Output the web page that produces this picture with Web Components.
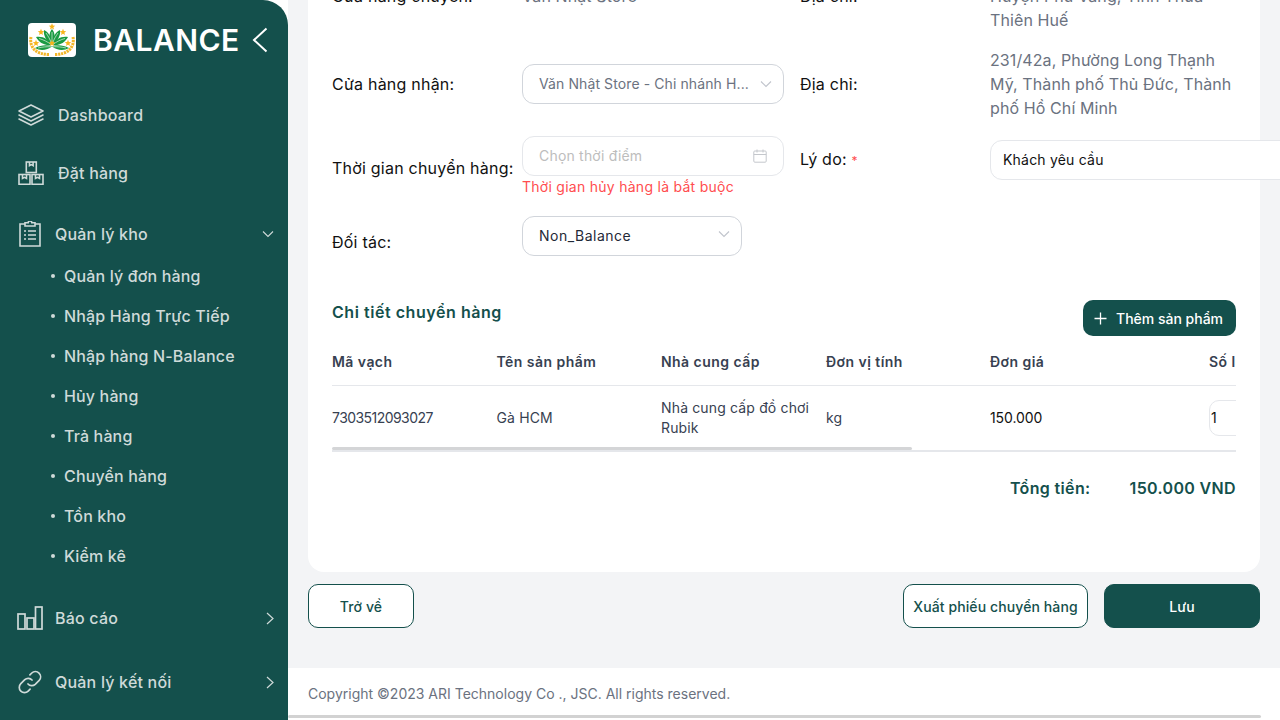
<!DOCTYPE html>
<html lang="vi">
<head>
<meta charset="utf-8">
<title>Balance</title>
<style>
html,body{margin:0;height:100%;overflow:hidden;background:#fff}
body{font-family:Inter,"Noto Sans",sans-serif;font-size:16px;color:#111}
</style>
</head>
<body>
<x-app>
  <x-sidebar slot="side">
    <x-nav-item h="58" tx="58" style="--ix:18px">
      <svg slot="icon" width="26" height="22" viewBox="0 0 26 22" fill="none" stroke="currentColor" stroke-width="1.6" stroke-linejoin="round" stroke-linecap="round"><path d="M13 1l12 6-12 6L1 7z"/><path d="M1 11l12 6 12-6"/><path d="M1 15l12 6 12-6"/></svg>
      Dashboard
    </x-nav-item>
    <x-nav-item h="58" tx="58" style="--ix:18px">
      <svg slot="icon" width="26" height="24" viewBox="0 0 26 24" fill="none" stroke="currentColor" stroke-width="1.6"><rect x="8.300" y="1" width="10" height="10.500"/><path d="M11.500 1v3.600l1.800-1 1.800 1V1"/><rect x="1" y="13.500" width="11" height="9.800"/><path d="M4.500 13.500v3.900l2-1 2 1v-3.900"/><rect x="14" y="13.500" width="11" height="9.800"/><path d="M17.500 13.500v3.900l2-1 2 1v-3.900"/></svg>
      Đặt hàng
    </x-nav-item>
    <x-nav-item h="44" tx="55" mt="10" chevron="down" style="--ix:19px">
      <svg slot="icon" width="22" height="26" viewBox="0 0 22 26" fill="none" stroke="currentColor" stroke-width="1.6"><path d="M6 3H1v22h20V3h-5"/><path d="M6 5h10V1.800h-3.200a1.800 1.800 0 0 0-3.600 0H6z"/><path d="M5 10h2M5 14h2M5 18h2M9 10h8M9 14h8M9 18h8"/></svg>
      Quản lý kho
    </x-nav-item>
    <x-sub-item>Quản lý đơn hàng</x-sub-item>
    <x-sub-item>Nhập Hàng Trực Tiếp</x-sub-item>
    <x-sub-item>Nhập hàng N-Balance</x-sub-item>
    <x-sub-item>Hủy hàng</x-sub-item>
    <x-sub-item>Trả hàng</x-sub-item>
    <x-sub-item>Chuyển hàng</x-sub-item>
    <x-sub-item>Tồn kho</x-sub-item>
    <x-sub-item>Kiểm kê</x-sub-item>
    <x-nav-item h="64" tx="55" mt="10" chevron="right" style="--ix:17px">
      <svg slot="icon" width="26" height="24" viewBox="0 0 26 24" fill="none" stroke="currentColor" stroke-width="1.700"><rect x="1" y="8" width="7" height="15"/><rect x="10" y="12" width="7" height="11"/><rect x="18.500" y="1" width="6.500" height="22"/></svg>
      Báo cáo
    </x-nav-item>
    <x-nav-item h="64" tx="55" chevron="right" style="--ix:18px">
      <svg slot="icon" width="24" height="24" viewBox="0 0 24 24" fill="none" stroke="currentColor" stroke-width="1.700" stroke-linecap="round"><path d="M10 14a5 5 0 0 0 7.200.3l4-4A5.200 5.200 0 0 0 13.800 3l-1.900 1.900"/><path d="M14 10a5 5 0 0 0-7.200-.3l-4 4a5.200 5.200 0 0 0 7.400 7.400l1.900-1.900"/></svg>
      Quản lý kết nối
    </x-nav-item>
  </x-sidebar>

  <x-card>
    <x-form-row mode="top">
      <span slot="l1">Cửa hàng chuyển:</span>
      <x-value slot="c1">Văn Nhật Store</x-value>
      <span slot="l2">Địa chỉ:</span>
      <x-value slot="c2">Huyện Phú Vang, Tỉnh Thừa Thiên Huế</x-value>
    </x-form-row>
    <x-form-row>
      <span slot="l1">Cửa hàng nhận:</span>
      <x-select slot="c1" muted>Văn Nhật Store - Chi nhánh H...</x-select>
      <span slot="l2">Địa chỉ:</span>
      <x-value slot="c2">231/42a, Phường Long Thạnh Mỹ, Thành phố Thủ Đức, Thành phố Hồ Chí Minh</x-value>
    </x-form-row>
    <x-form-row mode="date">
      <span slot="l1">Thời gian chuyển hàng:</span>
      <x-date slot="c1" error="Thời gian hủy hàng là bắt buộc">Chọn thời điểm</x-date>
      <span slot="l2">Lý do: <b>*</b></span>
      <x-input slot="c2">Khách yêu cầu</x-input>
    </x-form-row>
    <x-form-row mode="partner">
      <span slot="l1">Đối tác:</span>
      <x-select slot="c1" narrow>Non_Balance</x-select>
    </x-form-row>
    <x-products></x-products>
  </x-card>
  <x-actions></x-actions>
  <x-footer>Copyright ©2023 ARI Technology Co ., JSC. All rights reserved.</x-footer>
</x-app>

<script>
function def(name, html, init){
  customElements.define(name, class extends HTMLElement{
    constructor(){
      super();
      this.attachShadow({mode:'open'}).innerHTML = html;
    }
    connectedCallback(){ if(init) init(this, this.shadowRoot); }
  });
}
const chevronDown = '<svg width="12" height="8" viewBox="0 0 12 8" fill="none" stroke="currentColor" stroke-width="1.100"><path d="M1 1.500l5 5 5-5"/></svg>';
const chevronRight = '<svg width="8" height="13" viewBox="0 0 8 13" fill="none" stroke="currentColor" stroke-width="1.200"><path d="M1 1l6 5.500L1 12"/></svg>';
const starPath = 'M0-3.200l.9 2.200 2.300.2-1.800 1.500.6 2.300L0 1.800-2 3l.6-2.300L-3.200-.8l2.300-.2z';

def('x-app', `<style>
:host{display:flex;width:1280px;height:720px;overflow:hidden;background:#f3f4f6}
.side{flex:none;width:288px;height:720px;background:#fff}
main{flex:1;min-width:0;height:720px;display:flex;flex-direction:column;justify-content:flex-end;overflow:hidden}
.pad{display:flex;flex-direction:column;flex:none;padding:0 20px}
</style>
<div class="side"><slot name="side"></slot></div>
<main><div class="pad"><slot></slot></div><slot name="foot"></slot></main>`, (el)=>{
  const f = el.querySelector('x-footer'); if(f) f.slot='foot';
});

def('x-sidebar', `<style>
:host{display:block;width:288px;height:720px;background:#14504c;border-top-right-radius:25px;color:#cfdad9;overflow:hidden}
.head{display:flex;align-items:center;height:80px;padding-left:28px;margin-bottom:6px;color:#fff}
.logo{flex:none;display:block;width:48px;height:34px}
h1{margin:0 0 0 17px;font-size:30px;line-height:36px;font-weight:600;letter-spacing:.45px;color:#fff;white-space:nowrap}
.back{flex:none;margin-left:12px}
</style>
<div class="head">
<svg class="logo" viewBox="0 0 48 34">
 <rect width="48" height="34" rx="4" fill="#fff"/>
 <g fill="none" stroke="#f3b62a" stroke-width="3" stroke-dasharray="2.200 .8">
  <path d="M3 14C1 25 9 31.500 21 31.500"/><path d="M45 14C47 25 39 31.500 27 31.500"/>
 </g>
 <g fill="#1a9a42">
  <path d="M24 6c3.500 4.500 3.500 10 0 15-3.500-5-3.500-10.500 0-15z"/>
  <path d="M16 7c5 2 7.500 8 7.500 14C18.500 18 15 12.500 16 7z"/>
  <path d="M32 7c-5 2-7.500 8-7.500 14C29.500 18 33 12.500 32 7z"/>
  <path d="M8 14c7-1 12.500 2 15.500 8C16.500 23 11 19.500 8 14z"/>
  <path d="M40 14c-7-1-12.500 2-15.500 8C31.500 23 37 19.500 40 14z"/>
  <path d="M7 25c6-3 12-3.500 17-1.500-5 4-12 4.500-17 1.500z"/>
  <path d="M41 25c-6-3-12-3.500-17-1.500 5 4 12 4.500 17 1.500z"/>
 </g>
 <g fill="none" stroke="#fff" stroke-width=".6">
  <path d="M24 9v11M18 10c2 3 4 6 5.300 10M30 10c-2 3-4 6-5.300 10M11 15.500c4 1 9 3.500 12 6M37 15.500c-4 1-9 3.500-12 6M10 25c4-1 9-1.500 13-1.200M38 25c-4-1-9-1.500-13-1.200"/>
 </g>
 <g fill="#f7b51c">
  <path transform="translate(24 3.500)" d="${starPath}"/>
  <path transform="translate(13 9)" d="${starPath}"/>
  <path transform="translate(35 9)" d="${starPath}"/>
  <path transform="translate(8 20)" d="${starPath}"/>
  <path transform="translate(40 20)" d="${starPath}"/>
  <path transform="translate(24 20)" d="${starPath}"/>
 </g>
</svg>
<h1>BALANCE</h1>
<svg class="back" width="16" height="26" viewBox="0 0 16 26" fill="none" stroke="#fff" stroke-width="2"><path d="M14.500 1.500L2 13l12.500 11.500"/></svg>
</div>
<slot></slot>`);

def('x-nav-item', `<style>
:host{display:flex;align-items:center;font-size:16px;font-weight:500;letter-spacing:.2px;white-space:nowrap}
.ic{flex:none;display:flex;padding-left:var(--ix,18px)}
.tx{flex:1}
.ch{flex:none;display:flex;width:28px;color:#cfdad9}
</style>
<div class="ic"><slot name="icon"></slot></div><div class="tx"><slot></slot></div><div class="ch"></div>`, (el, r)=>{
  el.style.height = el.getAttribute('h')+'px';
  if(el.getAttribute('mt')) el.style.marginTop = el.getAttribute('mt')+'px';
  const ic = r.querySelector('.ic');
  const ix = parseInt(el.style.getPropertyValue('--ix'));
  ic.style.width = (parseInt(el.getAttribute('tx')) - ix)+'px';
  const ch = el.getAttribute('chevron'), c = r.querySelector('.ch');
  if(ch==='down'){c.innerHTML=chevronDown;c.style.paddingLeft='2px';c.style.width='26px';}
  if(ch==='right'){c.innerHTML=chevronRight;c.style.paddingLeft='6px';c.style.width='22px';}
});

def('x-sub-item', `<style>
:host{display:flex;align-items:center;height:40px;padding-left:51px;font-size:16px;font-weight:500;letter-spacing:.15px;color:#cfdad9;white-space:nowrap}
i{width:4px;height:4px;border-radius:50%;background:#cfdad9;margin-right:9px;flex:none}
</style><i></i><slot></slot>`);

def('x-card', `<style>
:host{display:block;background:#fff;border-radius:16px;padding:0 24px 48px;flex:none}
</style><slot></slot>`);

def('x-form-row', `<style>
:host{display:grid;grid-template-columns:190px 262px 16px 190px 320px;width:904px;margin-bottom:16px;font-size:16px;line-height:24px;letter-spacing:.22px;color:#111}
.l,.c{display:flex;min-width:0}
.l{align-items:center}
.l1{grid-column:1}.c1{grid-column:2;display:block}.l2{grid-column:4}.c2{grid-column:5;display:block}
:host([mode=top]) .l{align-items:flex-start}
:host(:not([mode])) .c1{align-self:center}
:host([mode=date]) .l2{height:48px}
:host([mode=date]) .c2{padding-top:4px}
:host([mode=partner]){height:52px;margin-bottom:32px}
::slotted(span){white-space:nowrap}
</style>
<div class="l l1"><slot name="l1"></slot></div><div class="c c1"><slot name="c1"></slot></div>
<div class="l l2"><slot name="l2"></slot></div><div class="c c2"><slot name="c2"></slot></div>`, (el)=>{
  const b = el.querySelector('b');
  if(b){b.style.cssText='color:#ff4d4f;font-weight:400;font-size:12px';}
});

def('x-value', `<style>
:host{display:block;width:250px;font-size:16px;line-height:24px;letter-spacing:.1px;color:#6b7280}
</style><slot></slot>`);

def('x-select', `<style>
:host{display:flex;align-items:center;box-sizing:border-box;width:262px;height:40px;border:1px solid #d1d5db;border-radius:12px;padding:0 16px;background:#fff;font-size:14px;letter-spacing:.1px;color:#1f2937}
:host([muted]){color:#6b7280}
:host([narrow]){width:220px;letter-spacing:.5px}
.t{flex:1;min-width:0;white-space:nowrap}
.a{flex:none;margin-right:-5px;color:#c0c4cc;display:flex}
:host([narrow]) .a{margin-top:-4px}
</style><div class="t"><slot></slot></div><div class="a">${chevronDown}</div>`);

def('x-date', `<style>
:host{display:block;width:262px;font-size:14px;letter-spacing:.2px}
.b{display:flex;align-items:center;box-sizing:border-box;height:40px;border:1px solid #e5e7eb;border-radius:12px;padding:0 16px;color:#bdbdbd;background:#fff}
.t{flex:1}
.e{color:#ff4d4f;line-height:22px;height:24px;white-space:nowrap;letter-spacing:.27px}
svg{display:block}
</style><div class="b"><div class="t"><slot></slot></div>
<svg width="14" height="14" viewBox="0 0 14 14" fill="none" stroke="#c4c7cc" stroke-width="1"><rect x=".8" y="2" width="12.400" height="11.200" rx="1"/><path d="M.8 5.500h12.400M4 .5v3M10 .5v3"/></svg>
</div><div class="e"></div>`, (el, r)=>{ r.querySelector('.e').textContent = el.getAttribute('error'); });

def('x-input', `<style>
:host{display:flex;align-items:center;box-sizing:border-box;width:320px;height:40px;border:1px solid #e5e7eb;border-radius:12px;padding:0 12px;background:#fff;font-size:14px;letter-spacing:.2px;color:#111}
</style><slot></slot>`);

def('x-button', `<style>
:host{display:flex;align-items:center;justify-content:center;box-sizing:border-box;border-radius:10px;font-size:14px;font-weight:500;letter-spacing:.1px;white-space:nowrap;border:1px solid #14504c;color:#14504c;background:#fff;height:44px}
:host([solid]){background:#14504c;color:#fff}
</style><slot></slot>`);

def('x-products', `<style>
:host{display:block;width:904px}
.top{display:flex;justify-content:space-between;height:40px}
h2{margin:0;font-size:16px;line-height:24px;font-weight:600;letter-spacing:.55px;color:#14504c}
.add{display:flex;align-items:center;height:36px;width:153px;box-sizing:border-box;padding-left:11px;background:#14504c;color:#fff;border-radius:10px;font-size:14px;font-weight:500;white-space:nowrap}
.add svg{margin-right:9px;flex:none}
.tw{overflow:hidden;width:904px}
.r{display:grid;grid-template-columns:164.500px 164.500px 165px 164px 219px 120px;width:1000px;font-size:14px;color:#374151;align-items:center}
.h{box-sizing:border-box;height:46px;padding-bottom:2px;font-weight:600;letter-spacing:.45px;border-bottom:1px solid #e5e7eb}
.b{height:61px;box-sizing:border-box;padding-top:3px;line-height:20px;letter-spacing:.15px}
.code{letter-spacing:-.55px}
.p{color:#111;letter-spacing:-.1px}
.q{box-sizing:border-box;width:60px;height:36px;border:1px solid #e5e7eb;border-radius:10px;display:flex;align-items:center;color:#111;text-indent:1px}
.bar{height:3px;width:580px;background:#d4d5d7;border-radius:2px}
.line{height:2px;background:#e5e7eb}
.tot{display:flex;justify-content:flex-end;align-items:center;height:72px;font-weight:600;letter-spacing:.35px;color:#14504c}
.tot span+span{margin-left:39px}
</style>
<div class="top"><h2>Chi tiết chuyển hàng</h2>
<div class="add"><svg width="13" height="13" viewBox="0 0 13 13" stroke="#fff" stroke-width="1.300"><path d="M6.500 .5v12M.5 6.500h12"/></svg>Thêm sản phẩm</div></div>
<div class="tw">
<div class="r h"><div>Mã vạch</div><div>Tên sản phẩm</div><div>Nhà cung cấp</div><div>Đơn vị tính</div><div>Đơn giá</div><div>Số lượng</div></div>
<div class="r b"><div class="code">7303512093027</div><div>Gà HCM</div><div style="padding-right:10px">Nhà cung cấp đồ chơi Rubik</div><div>kg</div><div class="p">150.000</div><div><div class="q">1</div></div></div>
<div class="bar"></div><div class="line"></div>
</div>
<div class="tot"><span>Tổng tiền:</span><span>150.000 VND</span></div>`);

def('x-actions', `<style>
:host{display:flex;align-items:center;flex:none;height:44px;padding:12px 0 40px}
.sp{flex:1}
x-button.a{width:106px}x-button.b{width:185px;margin-right:16px}x-button.c{width:156px}
</style><x-button class="a">Trở về</x-button><div class="sp"></div><x-button class="b">Xuất phiếu chuyển hàng</x-button><x-button class="c" solid>Lưu</x-button>`);

def('x-footer', `<style>
:host{display:block;flex:none;background:#fff;height:52px}
.t{box-sizing:border-box;height:47px;padding:4px 0 0 20px;display:flex;align-items:center;font-size:14px;color:#6b7280;white-space:nowrap}
.s{height:3px;width:973px;background:#d2d2d2;border-radius:2px}
</style><div class="t"><slot></slot></div><div class="s"></div>`);
</script>
</body>
</html>
